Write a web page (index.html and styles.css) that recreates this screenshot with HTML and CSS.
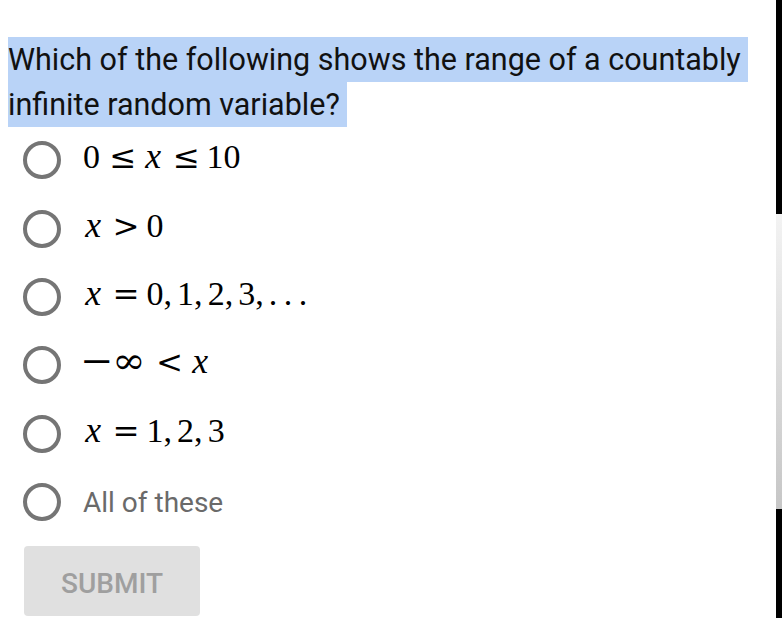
FILE: index.html
```html
<!DOCTYPE html>
<html>
<head>
<meta charset="utf-8">
<link rel="stylesheet" href="styles.css">
</head>
<body>
<div class="page">
  <p class="question"><span class="sel">Which of the following shows the range of a countably infinite random variable?</span></p>
  <div class="options">
    <div class="option"><span class="radio"></span><span class="math">0<span class="rel">≤</span><i>x</i><span class="rel">≤</span>10</span></div>
    <div class="option"><span class="radio"></span><span class="math"><i>x</i><span class="rel">&gt;</span>0</span></div>
    <div class="option"><span class="radio"></span><span class="math"><i>x</i><span class="rel">=</span>0<span class="punct">,</span>1<span class="punct">,</span>2<span class="punct">,</span>3<span class="punct">,</span><span class="dots">. . .</span></span></div>
    <div class="option"><span class="radio"></span><span class="math"><span class="neginf"><span class="stretch">−∞</span></span><span class="rel">&lt;</span><i>x</i></span></div>
    <div class="option"><span class="radio"></span><span class="math"><i>x</i><span class="rel">=</span>1<span class="punct">,</span>2<span class="punct">,</span>3</span></div>
    <div class="option"><span class="radio"></span><span class="label">All of these</span></div>
  </div>
  <button class="submit" type="button">SUBMIT</button>
</div>
<div class="scrollbar"><div class="thumb"></div></div>
</body>
</html>
```
FILE: styles.css
```css
html, body {
  margin: 0;
  padding: 0;
  background: #ffffff;
}
body {
  width: 782px;
  height: 618px;
  overflow: hidden;
  font-family: Roboto, "Liberation Sans", sans-serif;
}
.page {
  padding: 37px 0 0 8px;
}
.question {
  margin: 0;
  font-size: 30.5px;
  line-height: 45px;
  color: #111111;
  width: 760px;
}
.sel {
  background: #b9d3f7;
  padding: 4.6px 7px 4.6px 0;
  -webkit-box-decoration-break: clone;
  box-decoration-break: clone;
}
.options {
  display: flex;
  flex-direction: column;
  margin-left: 15px;
  margin-top: -1px;
}
.option {
  height: 68.4px;
  display: flex;
  align-items: center;
  gap: 22px;
}
.radio {
  width: 30px;
  height: 30px;
  border: 4px solid #757575;
  border-radius: 50%;
  flex: none;
}
.math {
  font-family: "Liberation Serif", "DejaVu Serif", serif;
  font-size: 34px;
  line-height: 40px;
  color: #000;
  white-space: nowrap;
  padding-bottom: 7px;
}
.math i {
  display: inline-block;
  width: 0.572em;
  text-align: center;
  font-style: italic;
  font-size: 1.05em;
}
.rel {
  display: inline-block;
  width: 0.778em;
  text-align: center;
  font-family: "DejaVu Serif", serif;
  font-size: 0.95em;
  margin: 0 0.2778em;
}
.neginf {
  display: inline-block;
  width: 64px;
  font-family: "DejaVu Serif", serif;
  font-size: 1.05em;
  line-height: 1;
  white-space: nowrap;
}
.stretch {
  display: inline-block;
  margin-left: -3px;
  letter-spacing: -1px;
  transform: scaleX(1.12);
  transform-origin: 0 50%;
}
.punct {
  margin-right: 0.15em;
}
.dots {
  letter-spacing: -0.03em;
}
.label {
  font-size: 28px;
  color: #6a6a6a;
}
.submit {
  display: block;
  margin: 10px 0 0 16px;
  width: 176px;
  height: 70px;
  border: none;
  border-radius: 4px;
  background: #e0e0e0;
  color: #9f9f9f;
  font-family: Roboto, "Liberation Sans", sans-serif;
  font-weight: 500;
  font-size: 28px;
  padding: 4px 0 0 0;
}
.scrollbar {
  position: fixed;
  top: 0;
  right: 0;
  width: 6px;
  height: 618px;
  background: #000;
}
.thumb {
  margin-top: 214px;
  height: 295px;
  background: linear-gradient(to bottom, #f3f3f3, #c6c6c6);
}
```
